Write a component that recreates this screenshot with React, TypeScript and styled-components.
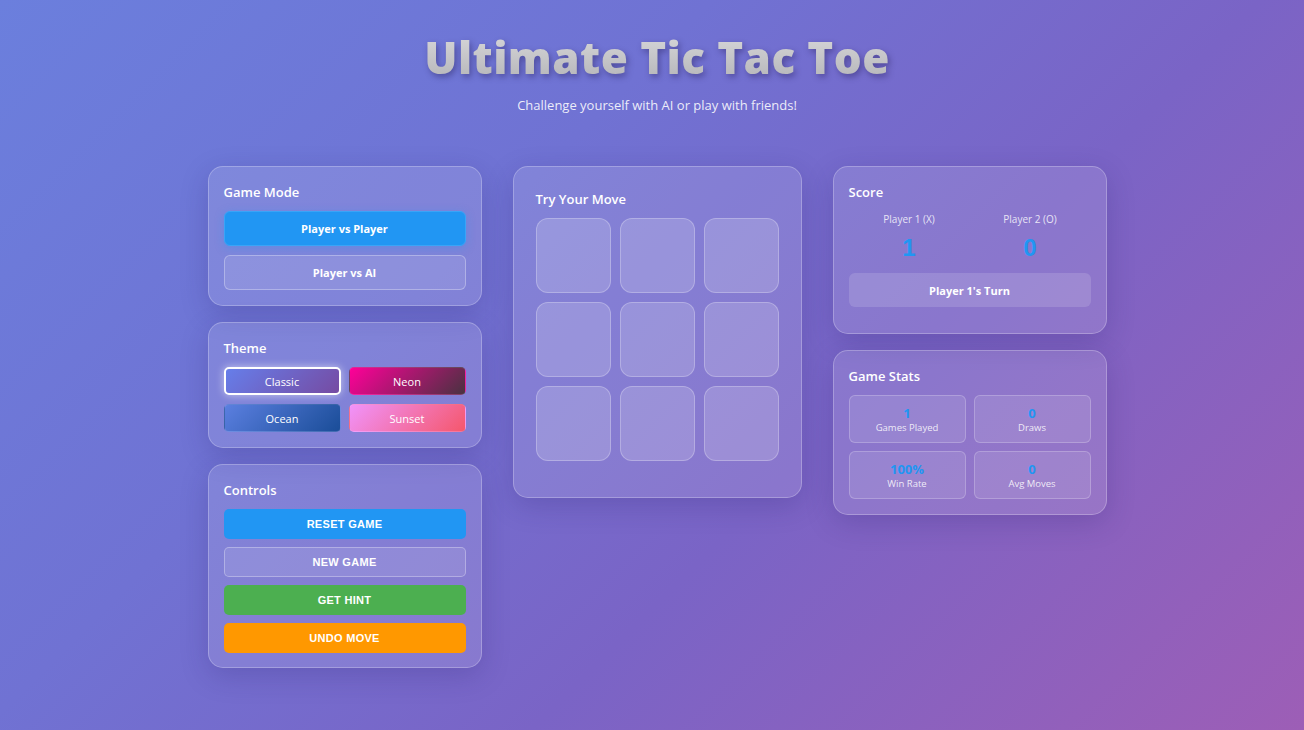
import React from "react";
import styled, { createGlobalStyle, css } from "styled-components";

const Global = createGlobalStyle`
  html, body { margin: 0; padding: 0; }
  body {
    min-height: 730px;
    font-family: "Open Sans", "Noto Sans", sans-serif;
    color: #fff;
    background: linear-gradient(135deg, #6b7fdd 0%, #7072d3 35%, #7a64c6 62%, #9d5eb6 100%);
    background-attachment: fixed;
  }
`;

const Page = styled.div`
  min-height: 730px;
  box-sizing: border-box;
  padding: 28px 0 0 10px;
  display: flex;
  flex-direction: column;
  align-items: center;
`;

const Title = styled.h1`
  margin: 0;
  font-family: "Open Sans", "Noto Sans", sans-serif;
  font-weight: 800;
  font-size: 44px;
  line-height: 58px;
  letter-spacing: 0.4px;
  color: #c4c4c6;
  background: linear-gradient(180deg, #dadadc 0%, #b2b2b6 100%);
  -webkit-background-clip: text;
  background-clip: text;
  -webkit-text-fill-color: transparent;
  filter: drop-shadow(2px 3px 3px rgba(40, 30, 90, 0.45));
`;

const Subtitle = styled.p`
  margin: 10px 0 0;
  font-size: 13px;
  line-height: 18px;
  color: rgba(255, 255, 255, 0.88);
`;

const Layout = styled.div`
  margin-top: 52px;
  display: grid;
  grid-template-columns: 274px 289px 274px;
  gap: 31px;
  align-items: start;
`;

const Column = styled.div`
  display: flex;
  flex-direction: column;
  gap: 16px;
`;

const Card = styled.section`
  box-sizing: border-box;
  padding: 16px 15px 15px;
  border-radius: 15px;
  background: rgba(255, 255, 255, 0.12);
  border: 1px solid rgba(255, 255, 255, 0.25);
  box-shadow: 0 8px 28px rgba(40, 30, 110, 0.22);
`;

const BoardCard = styled(Card)`
  padding: 23px 22px 36px;
`;

const ScoreCard = styled(Card)`
  padding-bottom: 26px;
`;

const ControlsCard = styled(Card)`
  padding-bottom: 14px;
`;

const CardTitle = styled.h3<{ $mb?: number }>`
  margin: 0 0 ${(p) => p.$mb ?? 10}px;
  font-size: 13px;
  line-height: 18px;
  font-weight: 600;
  color: #fff;
`;

const Stack = styled.div<{ $gap: number }>`
  display: flex;
  flex-direction: column;
  gap: ${(p) => p.$gap}px;
`;

const ModeButton = styled.button<{ $active?: boolean }>`
  height: 35px;
  border-radius: 6px;
  font-family: "Open Sans", sans-serif;
  font-size: 11px;
  font-weight: 700;
  color: #fff;
  cursor: pointer;
  ${(p) =>
    p.$active
      ? css`
          background: #2196f3;
          border: 1px solid #3aa4f7;
          box-shadow: 0 2px 10px rgba(33, 150, 243, 0.35);
        `
      : css`
          background: rgba(255, 255, 255, 0.1);
          border: 1px solid rgba(255, 255, 255, 0.3);
        `}
`;

const ThemeGrid = styled.div`
  display: grid;
  grid-template-columns: 1fr 1fr;
  gap: 9px 8px;
`;

const ThemeButton = styled.button<{ $bg: string; $active?: boolean }>`
  height: 28px;
  border-radius: 5px;
  font-family: "Open Sans", sans-serif;
  font-size: 11px;
  color: #fff;
  background: ${(p) => p.$bg};
  cursor: pointer;
  border: ${(p) => (p.$active ? "2px solid #fff" : "1px solid rgba(255,255,255,0.12)")};
  box-shadow: ${(p) => (p.$active ? "0 0 8px rgba(255,255,255,0.55)" : "none")};
`;

const ControlButton = styled.button<{ $bg: string; $outline?: boolean }>`
  height: 30px;
  border-radius: 5px;
  font-family: "Liberation Sans", Arial, sans-serif;
  font-size: 11px;
  font-weight: 700;
  letter-spacing: 0.3px;
  color: #fff;
  background: ${(p) => p.$bg};
  border: ${(p) => (p.$outline ? "1px solid rgba(255,255,255,0.3)" : "none")};
  cursor: pointer;
`;

const Board = styled.div`
  display: grid;
  grid-template-columns: repeat(3, 75px);
  grid-auto-rows: 75px;
  gap: 9px;
`;

const Cell = styled.button`
  border-radius: 12px;
  background: rgba(255, 255, 255, 0.17);
  border: 1px solid rgba(255, 255, 255, 0.25);
  cursor: pointer;
`;

const ScoreRow = styled.div`
  display: grid;
  grid-template-columns: 1fr 1fr;
  text-align: center;
  margin-bottom: 11px;
`;

const ScoreItem = styled.div`
  display: flex;
  flex-direction: column;
  align-items: center;
`;

const ScoreLabel = styled.span`
  font-size: 10px;
  line-height: 14px;
  color: rgba(255, 255, 255, 0.82);
`;

const ScoreValue = styled.span`
  margin-top: 8px;
  font-family: "Liberation Sans", Arial, sans-serif;
  font-size: 24px;
  line-height: 28px;
  font-weight: 700;
  color: #2196f3;
`;

const Turn = styled.div`
  height: 34px;
  border-radius: 6px;
  background: rgba(255, 255, 255, 0.14);
  display: flex;
  align-items: center;
  justify-content: center;
  font-size: 11px;
  font-weight: 700;
`;

const StatsGrid = styled.div`
  display: grid;
  grid-template-columns: 1fr 1fr;
  gap: 8px;
`;

const StatBox = styled.div`
  height: 48px;
  box-sizing: border-box;
  border-radius: 6px;
  background: rgba(255, 255, 255, 0.1);
  border: 1px solid rgba(255, 255, 255, 0.22);
  display: flex;
  flex-direction: column;
  align-items: center;
  justify-content: center;
`;

const StatValue = styled.span`
  font-size: 13px;
  line-height: 16px;
  font-weight: 700;
  color: #2196f3;
`;

const StatLabel = styled.span`
  font-size: 9.5px;
  line-height: 13px;
  color: rgba(255, 255, 255, 0.85);
`;

const themes = [
  { name: "Classic", bg: "linear-gradient(135deg, #667eea, #764ba2)", active: true },
  { name: "Neon", bg: "linear-gradient(135deg, #ff0099, #493240)" },
  { name: "Ocean", bg: "linear-gradient(135deg, #5b7fe0, #1a4d98)" },
  { name: "Sunset", bg: "linear-gradient(135deg, #f093fb, #f5576c)" },
];

const stats = [
  { v: "1", l: "Games Played" },
  { v: "0", l: "Draws" },
  { v: "100%", l: "Win Rate" },
  { v: "0", l: "Avg Moves" },
];

export default function App() {
  return (
    <>
      <Global />
      <Page>
        <Title>Ultimate Tic Tac Toe</Title>
        <Subtitle>Challenge yourself with AI or play with friends!</Subtitle>
        <Layout>
          <Column>
            <Card>
              <CardTitle>Game Mode</CardTitle>
              <Stack $gap={9}>
                <ModeButton $active>Player vs Player</ModeButton>
                <ModeButton>Player vs AI</ModeButton>
              </Stack>
            </Card>
            <Card>
              <CardTitle>Theme</CardTitle>
              <ThemeGrid>
                {themes.map((t) => (
                  <ThemeButton key={t.name} $bg={t.bg} $active={t.active}>
                    {t.name}
                  </ThemeButton>
                ))}
              </ThemeGrid>
            </Card>
            <ControlsCard>
              <CardTitle>Controls</CardTitle>
              <Stack $gap={8}>
                <ControlButton $bg="#2196f3">RESET GAME</ControlButton>
                <ControlButton $bg="rgba(255,255,255,0.1)" $outline>
                  NEW GAME
                </ControlButton>
                <ControlButton $bg="#4caf50">GET HINT</ControlButton>
                <ControlButton $bg="#ff9800">UNDO MOVE</ControlButton>
              </Stack>
            </ControlsCard>
          </Column>
          <BoardCard>
            <CardTitle $mb={10}>Try Your Move</CardTitle>
            <Board>
              {Array.from({ length: 9 }).map((_, i) => (
                <Cell key={i} aria-label={`cell ${i + 1}`} />
              ))}
            </Board>
          </BoardCard>
          <Column>
            <ScoreCard>
              <CardTitle $mb={11}>Score</CardTitle>
              <ScoreRow>
                <ScoreItem>
                  <ScoreLabel>Player 1 (X)</ScoreLabel>
                  <ScoreValue>1</ScoreValue>
                </ScoreItem>
                <ScoreItem>
                  <ScoreLabel>Player 2 (O)</ScoreLabel>
                  <ScoreValue>0</ScoreValue>
                </ScoreItem>
              </ScoreRow>
              <Turn>Player 1's Turn</Turn>
            </ScoreCard>
            <Card>
              <CardTitle>Game Stats</CardTitle>
              <StatsGrid>
                {stats.map((s) => (
                  <StatBox key={s.l}>
                    <StatValue>{s.v}</StatValue>
                    <StatLabel>{s.l}</StatLabel>
                  </StatBox>
                ))}
              </StatsGrid>
            </Card>
          </Column>
        </Layout>
      </Page>
    </>
  );
}
